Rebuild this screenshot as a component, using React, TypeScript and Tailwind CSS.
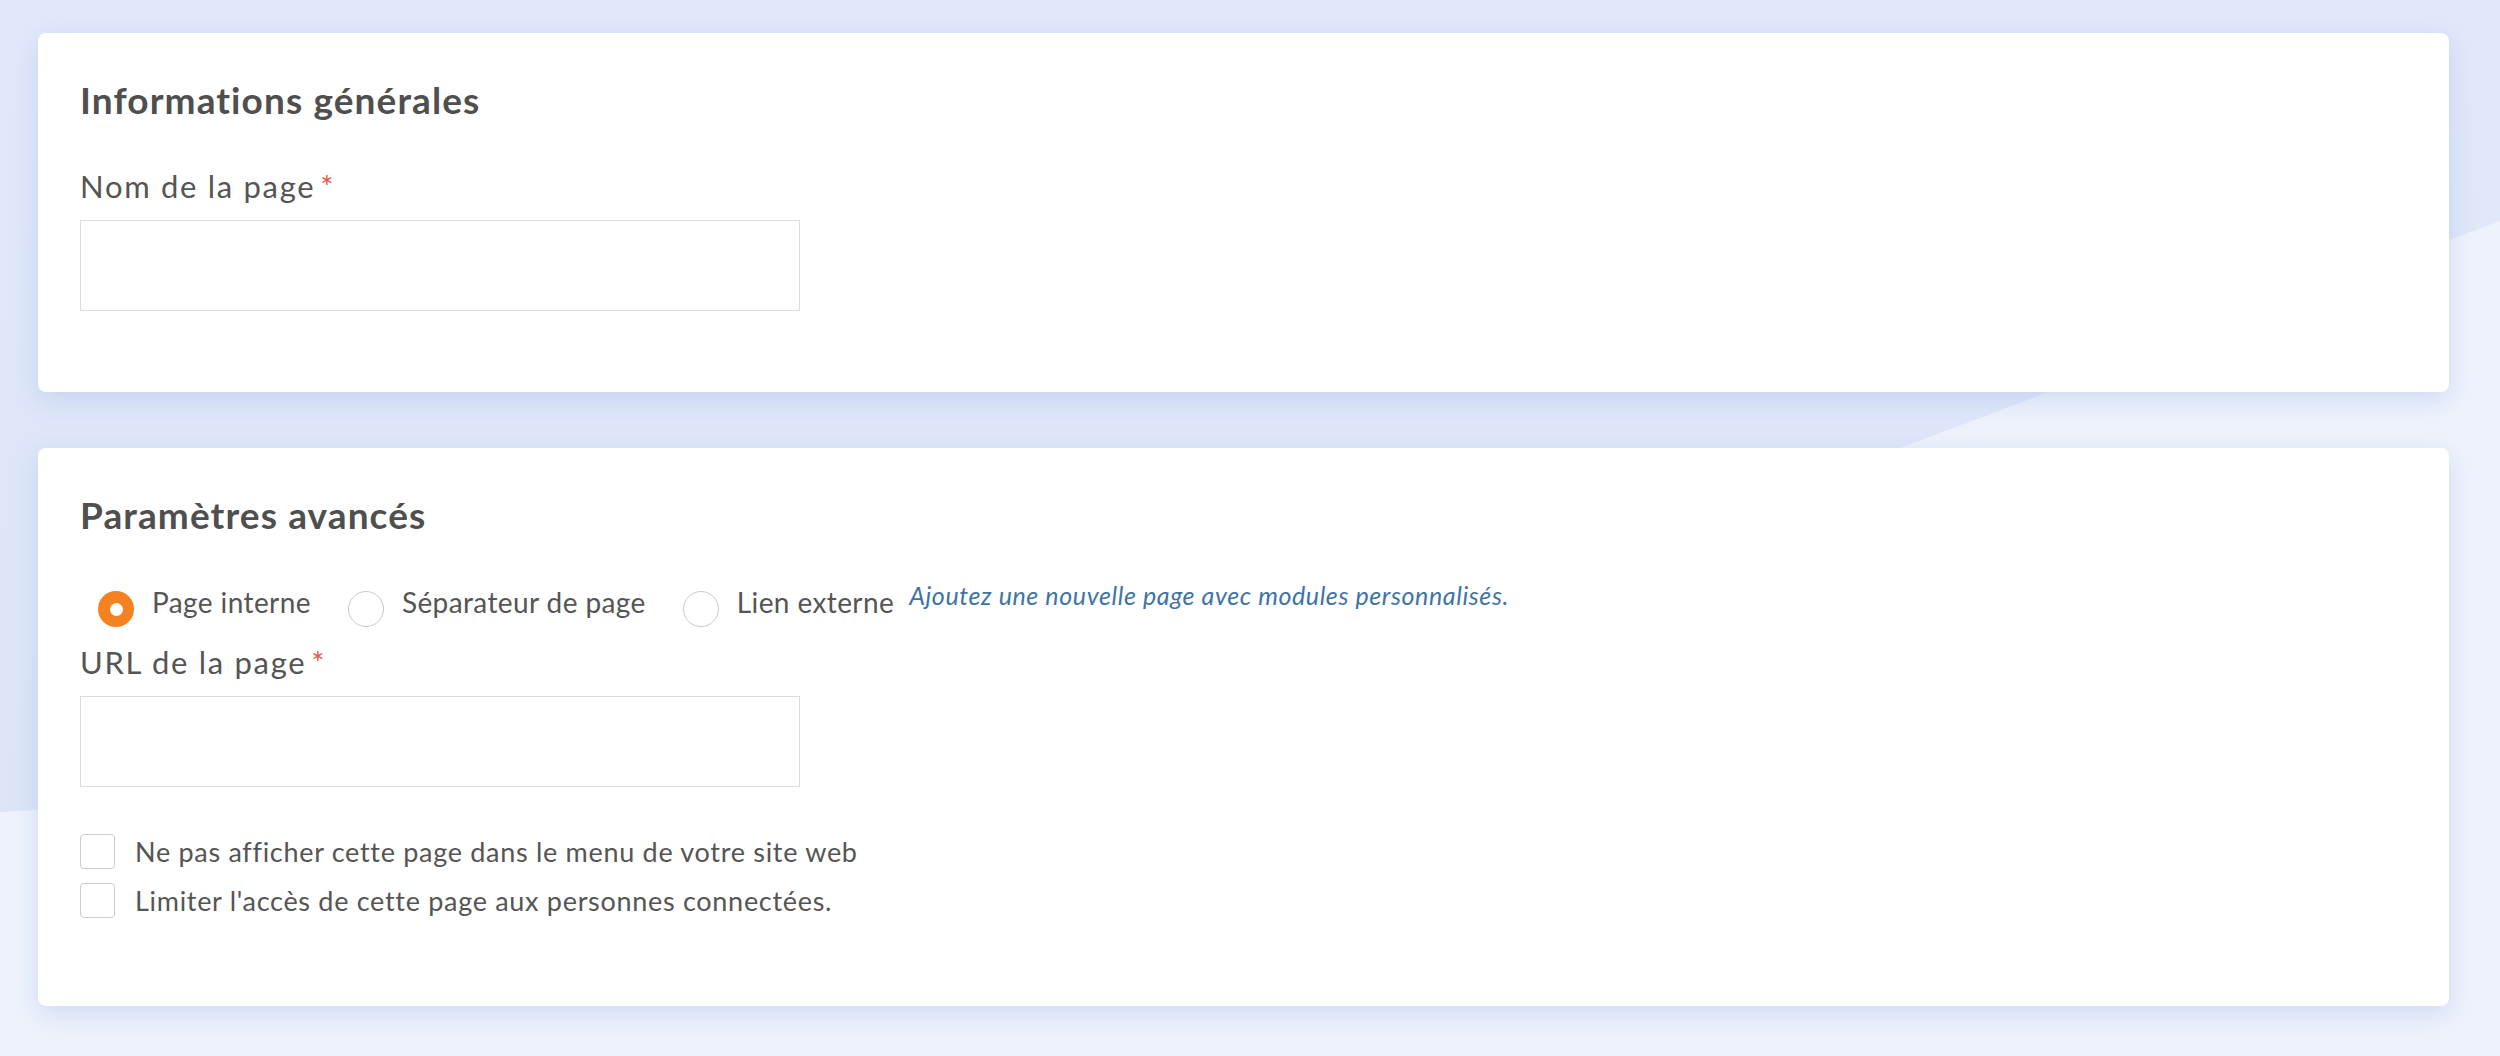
import React from 'react';

// ── Petits éléments de formulaire ─────────────────────────────────────────────
function Label({ text, className = '' }: { text: string; className?: string }) {
  return (
    <p className={`text-[31px] leading-none tracking-[1.7px] text-[#555555] ${className}`}>
      {text}
      <span className="ml-[5px] text-[#e8534b]">*</span>
    </p>
  );
}

function TextInput({ className = '' }: { className?: string }) {
  return (
    <input
      type="text"
      className={`block w-[720px] h-[91px] border border-[#dcdcdc] bg-white px-4 text-[28px] outline-none ${className}`}
    />
  );
}

function Radio({ label, checked }: { label: string; checked?: boolean }) {
  return (
    <label className="flex items-start gap-[18px] cursor-pointer">
      {checked ? (
        <span className="mt-[8px] flex h-[36px] w-[36px] shrink-0 items-center justify-center rounded-full bg-[#f58220]">
          <span className="h-[13px] w-[13px] rounded-full bg-white" />
        </span>
      ) : (
        <span className="mt-[8px] h-[36px] w-[36px] shrink-0 rounded-full border border-[#c9c9c9] bg-white" />
      )}
      <span className="mt-[5px] text-[28px] leading-none tracking-[0.4px] text-[#555555]">{label}</span>
    </label>
  );
}

function Checkbox({ label }: { label: string }) {
  return (
    <label className="flex items-center gap-[20px] cursor-pointer">
      <span className="h-[35px] w-[35px] shrink-0 rounded-[4px] border border-[#cccccc] bg-white" />
      <span className="text-[27px] leading-none tracking-[0.7px] text-[#555555]">{label}</span>
    </label>
  );
}

function Card({ title, children, className = '' }: { title: string; children: React.ReactNode; className?: string }) {
  return (
    <section
      className={`rounded-[8px] bg-white px-[42px] pt-[48px] shadow-[0_8px_26px_rgba(150,178,232,0.35)] ${className}`}>
      <h2 className="text-[37px] font-bold leading-none tracking-[1.1px] text-[#4f4f4f]">{title}</h2>
      {children}
    </section>
  );
}

export default function App() {
  return (
    <div className="relative min-h-[1056px] overflow-hidden bg-[#eef2fc] font-['Lato','Noto_Sans',sans-serif]">
      {/* Décor de fond */}
      <svg className="absolute inset-0 h-[1056px] w-[2500px]" viewBox="0 0 2500 1056" preserveAspectRatio="none">
        <defs>
          <linearGradient id="bgTop" x1="0" y1="0" x2="0" y2="1">
            <stop offset="0" stopColor="#e1e8f9" />
            <stop offset="1" stopColor="#dce6f7" />
          </linearGradient>
        </defs>
        <path d="M0 0H2500V221L1903 447C1300 670 600 780 0 812Z" fill="url(#bgTop)" />
      </svg>

      <div className="relative flex flex-col gap-[56px] pt-[33px] pl-[38px] pr-[51px]">
        {/* Informations générales */}
        <Card title="Informations générales" className="pb-[81px]">
          <Label text="Nom de la page" className="mt-[53px]" />
          <TextInput className="mt-[18px]" />
        </Card>

        {/* Paramètres avancés */}
        <Card title="Paramètres avancés" className="pb-[88px]">
          <div className="mt-[50px] flex items-start pl-[18px]">
            <div className="flex items-start gap-[37px]">
              <Radio label="Page interne" checked />
              <Radio label="Séparateur de page" />
              <Radio label="Lien externe" />
            </div>
            <span className="ml-[15px] text-[25px] italic leading-none tracking-[0.6px] text-[#3e74a6]">
              Ajoutez une nouvelle page avec modules personnalisés.
            </span>
          </div>
          <Label text="URL de la page" className="mt-[20px]" />
          <TextInput className="mt-[18px]" />
          <div className="mt-[47px] flex flex-col gap-[14px]">
            <Checkbox label="Ne pas afficher cette page dans le menu de votre site web" />
            <Checkbox label="Limiter l'accès de cette page aux personnes connectées." />
          </div>
        </Card>
      </div>
    </div>
  );
}
